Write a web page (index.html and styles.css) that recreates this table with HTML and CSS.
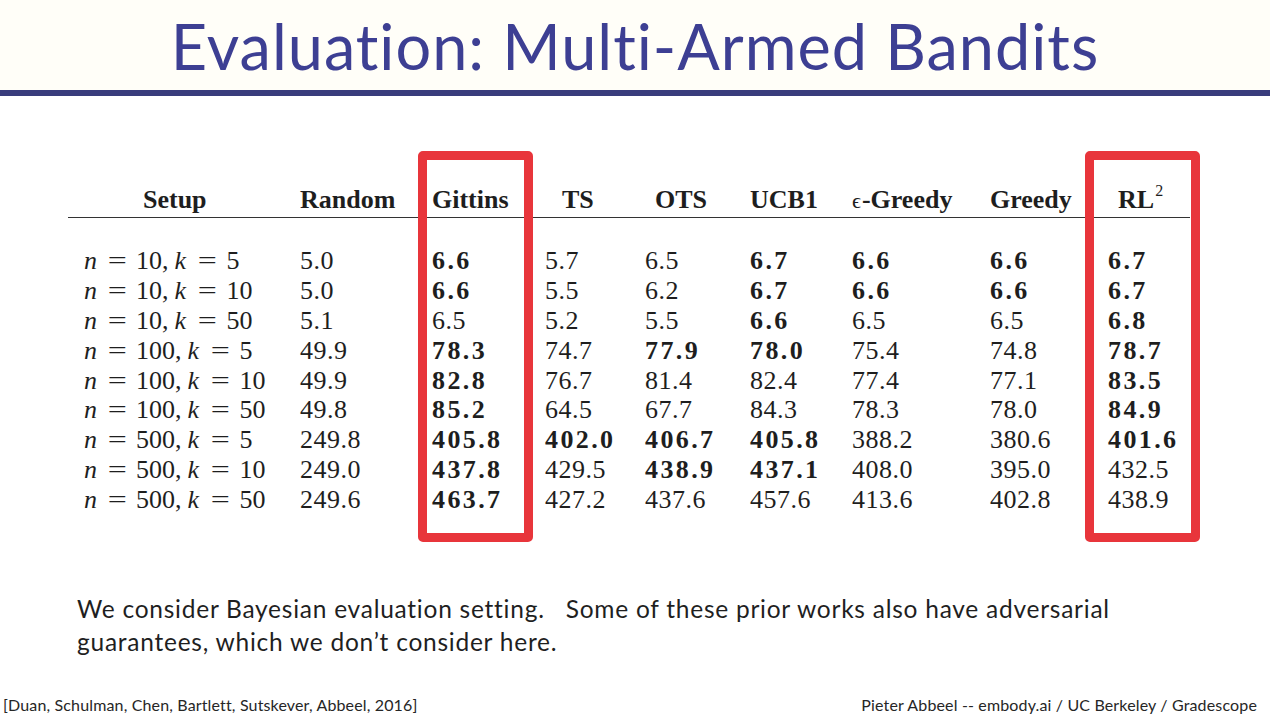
FILE: index.html
```html
<!DOCTYPE html>
<html>
<head>
<meta charset="utf-8">
<link rel="stylesheet" href="styles.css">
</head>
<body>
<div class="slide">
  <header class="title-bar">
    <h1 class="title">Evaluation: Multi-Armed Bandits</h1>
  </header>
  <div class="rule"></div>

  <section class="table-wrap">
    <div class="grid head">
      <div class="h h-setup">Setup</div>
      <div class="h">Random</div>
      <div class="h">Gittins</div>
      <div class="h h-ts">TS</div>
      <div class="h h-ots">OTS</div>
      <div class="h">UCB1</div>
      <div class="h"><span class="eps">&#1013;</span>-Greedy</div>
      <div class="h">Greedy</div>
      <div class="h h-rl">RL<sup>2</sup></div>
    </div>
    <div class="grid body">
      <div class="s"><i>n</i><span class="eq"><span>=</span></span>10<span class="cm">,</span><i>k</i><span class="eq"><span>=</span></span>5</div>
      <div>5.0</div><div class="b">6.6</div><div>5.7</div><div>6.5</div><div class="b">6.7</div><div class="b">6.6</div><div class="b">6.6</div><div class="b">6.7</div>

      <div class="s"><i>n</i><span class="eq"><span>=</span></span>10<span class="cm">,</span><i>k</i><span class="eq"><span>=</span></span>10</div>
      <div>5.0</div><div class="b">6.6</div><div>5.5</div><div>6.2</div><div class="b">6.7</div><div class="b">6.6</div><div class="b">6.6</div><div class="b">6.7</div>

      <div class="s"><i>n</i><span class="eq"><span>=</span></span>10<span class="cm">,</span><i>k</i><span class="eq"><span>=</span></span>50</div>
      <div>5.1</div><div>6.5</div><div>5.2</div><div>5.5</div><div class="b">6.6</div><div>6.5</div><div>6.5</div><div class="b">6.8</div>

      <div class="s"><i>n</i><span class="eq"><span>=</span></span>100<span class="cm">,</span><i>k</i><span class="eq"><span>=</span></span>5</div>
      <div>49.9</div><div class="b">78.3</div><div>74.7</div><div class="b">77.9</div><div class="b">78.0</div><div>75.4</div><div>74.8</div><div class="b">78.7</div>

      <div class="s"><i>n</i><span class="eq"><span>=</span></span>100<span class="cm">,</span><i>k</i><span class="eq"><span>=</span></span>10</div>
      <div>49.9</div><div class="b">82.8</div><div>76.7</div><div>81.4</div><div>82.4</div><div>77.4</div><div>77.1</div><div class="b">83.5</div>

      <div class="s"><i>n</i><span class="eq"><span>=</span></span>100<span class="cm">,</span><i>k</i><span class="eq"><span>=</span></span>50</div>
      <div>49.8</div><div class="b">85.2</div><div>64.5</div><div>67.7</div><div>84.3</div><div>78.3</div><div>78.0</div><div class="b">84.9</div>

      <div class="s"><i>n</i><span class="eq"><span>=</span></span>500<span class="cm">,</span><i>k</i><span class="eq"><span>=</span></span>5</div>
      <div>249.8</div><div class="b">405.8</div><div class="b">402.0</div><div class="b">406.7</div><div class="b">405.8</div><div>388.2</div><div>380.6</div><div class="b">401.6</div>

      <div class="s"><i>n</i><span class="eq"><span>=</span></span>500<span class="cm">,</span><i>k</i><span class="eq"><span>=</span></span>10</div>
      <div>249.0</div><div class="b">437.8</div><div>429.5</div><div class="b">438.9</div><div class="b">437.1</div><div>408.0</div><div>395.0</div><div>432.5</div>

      <div class="s"><i>n</i><span class="eq"><span>=</span></span>500<span class="cm">,</span><i>k</i><span class="eq"><span>=</span></span>50</div>
      <div>249.6</div><div class="b">463.7</div><div>427.2</div><div>437.6</div><div>457.6</div><div>413.6</div><div>402.8</div><div>438.9</div>
    </div>
    <div class="mark mark-gittins"></div>
    <div class="mark mark-rl"></div>
  </section>

  <p class="note">We consider Bayesian evaluation setting.&nbsp;&nbsp; Some of these prior works also have adversarial guarantees, which we don’t consider here.</p>

  <footer class="foot">
    <span class="cite">[Duan, Schulman, Chen, Bartlett, Sutskever, Abbeel, 2016]</span>
    <span class="credit">Pieter Abbeel -- embody.ai / UC Berkeley / Gradescope</span>
  </footer>
</div>
</body>
</html>
```

FILE: styles.css
```css
html, body {
  margin: 0;
  padding: 0;
  background: #ffffff;
}

.slide {
  width: 1270px;
  height: 715px;
  overflow: hidden;
  position: relative;
  display: flex;
  flex-direction: column;
  background: #ffffff;
}

.title-bar {
  height: 90px;
  box-sizing: border-box;
  padding-top: 2px;
  background: #fffef8;
  display: flex;
  justify-content: center;
}

.title {
  margin: 0;
  font-family: "Lato", "Open Sans", sans-serif;
  font-weight: 400;
  font-size: 63px;
  line-height: 88px;
  letter-spacing: 1px;
  font-variant-ligatures: none;
  font-feature-settings: "liga" 0, "clig" 0;
  color: #3d3f93;
}

.rule {
  height: 6px;
  background: #393c7c;
}

.table-wrap {
  position: relative;
  margin: 90px 0 0 68px;
  width: 1122px;
  font-family: "Liberation Serif", "Times New Roman", serif;
  color: #1e1e1e;
}

.grid {
  display: grid;
  grid-template-columns: 232px 132px 113px 100px 105px 102px 138px 118px 82px;
}

.h {
  height: 31px;
  line-height: 27px;
  font-size: 26px;
  font-weight: 700;
  border-bottom: 1px solid #333;
  white-space: nowrap;
}

.h-setup { padding-left: 75px; }
.h-ts { padding-left: 17px; }
.h-ots { padding-left: 10px; }
.h-rl { padding-left: 10px; }

.h sup {
  font-size: 16px;
  font-weight: 400;
  line-height: 0;
  vertical-align: 12px;
  margin-left: 1px;
}

.eps {
  font-weight: 400;
  font-size: 22px;
  margin-right: 1px;
}

.body {
  padding-top: 28px;
}

.body > div {
  font-size: 26px;
  line-height: 29.9px;
  height: 29.9px;
  letter-spacing: 0.5px;
  white-space: nowrap;
}

.body > .b {
  font-weight: 700;
  letter-spacing: 2.4px;
}

.body > .s {
  padding-left: 16px;
  letter-spacing: 0;
}

.s i {
  font-style: italic;
  display: inline-block;
  width: 14px;
}

.eq {
  display: inline-block;
  width: 38px;
  text-align: center;
}

.eq span {
  display: inline-block;
  transform: scaleX(1.3);
}

.cm {
  margin-right: 6px;
}

.mark {
  position: absolute;
  top: -35px;
  width: 115px;
  height: 391px;
  box-sizing: border-box;
  border: 9px solid #e8353b;
  border-radius: 5px;
}

.mark-gittins { left: 350px; }
.mark-rl { left: 1017px; }

.note {
  margin: 77px 0 0 77px;
  width: 1100px;
  font-family: "Lato", "Open Sans", sans-serif;
  font-size: 24.5px;
  letter-spacing: 0.75px;
  line-height: 33px;
  color: #1f1f1f;
}

.foot {
  margin-top: auto;
  height: 22px;
  display: flex;
  justify-content: space-between;
  align-items: center;
  padding: 0 13px 0 3px;
  font-family: "Lato", "Open Sans", sans-serif;
  font-size: 16px;
  letter-spacing: 0.15px;
  color: #262626;
}
```
